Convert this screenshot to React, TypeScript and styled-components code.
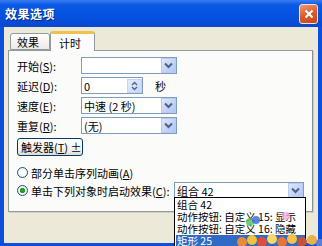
import React from "react";
import styled, { createGlobalStyle } from "styled-components";

const GlobalStyle = createGlobalStyle`
    html, body {
        margin: 0;
        padding: 0;
        background: #ffffff;
    }
    body {
        font-family: "Noto Sans CJK SC", "DejaVu Sans", sans-serif;
        font-size: 11px;
        color: #000;
    }
`;

const Window = styled.div`
    position: relative;
    width: 322px;
    height: 246px;
    overflow: hidden;
    display: flex;
    flex-direction: column;
    background: #0c4fdc;
`;

const TitleBar = styled.div`
    height: 27px;
    flex: none;
    display: flex;
    align-items: center;
    justify-content: space-between;
    padding: 0 4px 0 5px;
    background: linear-gradient(180deg, #3a7cf0 0%, #0a5ae6 18%, #0551e0 60%, #0a48cf 100%);
`;

const Title = styled.span`
    color: #fff;
    font-weight: bold;
    font-size: 12px;
    letter-spacing: 0.5px;
    text-shadow: 1px 1px 0 #0a2a7a;
`;

const CloseButton = styled.div`
    width: 17px;
    height: 18px;
    border: 1px solid #f4e4dc;
    border-radius: 3px;
    background: linear-gradient(160deg, #ee9a70 0%, #d9582a 55%, #c8461c 100%);
    display: flex;
    align-items: center;
    justify-content: center;
`;

const Frame = styled.div`
    flex: 1;
    margin: 0 4px 3px 4px;
    padding: 3px 0 0 4px;
    background: #ece9d8;
    display: flex;
    flex-direction: column;
`;

const TabStrip = styled.div`
    height: 20px;
    display: flex;
    align-items: flex-end;
    padding-left: 2px;
`;

const Tab = styled.div<{ $active?: boolean }>`
    height: ${(p) => (p.$active ? 20 : 17)}px;
    width: ${(p) => (p.$active ? 45 : 40)}px;
    box-sizing: border-box;
    padding-left: ${(p) => (p.$active ? 8 : 6)}px;
    display: flex;
    align-items: center;
    font-size: 11px;
    background: ${(p) => (p.$active ? "#fcfcfe" : "linear-gradient(#fefefe, #ecebe6)")};
    border: 1px solid #919b9c;
    border-bottom: ${(p) => (p.$active ? "none" : "1px solid #919b9c")};
    border-top: ${(p) => (p.$active ? "3px solid #f3c04c" : "1px solid #919b9c")};
    border-radius: 3px 3px 0 0;
    margin-bottom: ${(p) => (p.$active ? -1 : 0)}px;
    position: relative;
    z-index: ${(p) => (p.$active ? 1 : 0)};
`;

const Panel = styled.div`
    width: 305px;
    height: 162px;
    box-sizing: border-box;
    background: #fbfbf9;
    border: 1px solid #919b9c;
    border-right-color: #8a9090;
    box-shadow: 1px 1px 0 #d0cfc4;
    padding: 6px 8px 0 8px;
    display: flex;
    flex-direction: column;
`;

const FieldRow = styled.div`
    height: 17px;
    display: flex;
    align-items: center;
    margin-bottom: 3px;
`;

const Label = styled.span`
    width: 64px;
    flex: none;
    white-space: nowrap;
`;

const Key = styled.span`
    text-decoration: underline;
`;

const ComboBox = styled.div<{ $width: number }>`
    width: ${(p) => p.$width}px;
    height: 17px;
    box-sizing: border-box;
    border: 1px solid #7f9db9;
    background: #fff;
    display: flex;
    align-items: center;
    padding-left: 2px;
    flex: none;
`;

const ComboText = styled.span`
    flex: 1;
    white-space: nowrap;
    overflow: hidden;
`;

const DropButton = styled.div`
    width: 15px;
    height: 15px;
    box-sizing: border-box;
    border: 1px solid #b9cbf3;
    background: linear-gradient(135deg, #dfe8fd 0%, #c0d2f8 60%, #b0c6f5 100%);
    display: flex;
    align-items: center;
    justify-content: center;
`;

const SpinButtons = styled.div`
    width: 15px;
    height: 14px;
    display: flex;
    flex-direction: column;
    align-items: center;
    justify-content: center;
    background: linear-gradient(135deg, #e6edfd 0%, #c6d6f9 100%);
    border: 1px solid #c3d3fb;
    box-sizing: border-box;
`;

const Unit = styled.span`
    margin-left: 12px;
`;

const TriggerButton = styled.div`
    margin-top: 1px;
    width: 66px;
    height: 18px;
    box-sizing: border-box;
    border: 1px solid #003c74;
    border-radius: 3px;
    background: linear-gradient(#ffffff, #f0efe8 70%, #dcdad0);
    display: flex;
    align-items: center;
    padding-left: 3px;
    white-space: nowrap;
`;

const RadioRow = styled.div<{ $top: number }>`
    height: 17px;
    margin-top: ${(p) => p.$top}px;
    display: flex;
    align-items: center;
    white-space: nowrap;
`;

const RadioDot = styled.span<{ $checked?: boolean }>`
    width: 11px;
    height: 11px;
    box-sizing: border-box;
    border-radius: 50%;
    border: 1px solid #1c5180;
    background: radial-gradient(circle, ${(p) => (p.$checked ? "#21a121 0 2.5px," : "")} #ffffff 3px, #e0e0d8 100%);
    margin-right: 3px;
    flex: none;
`;

const Spacer = styled.div`
    flex: 1;
`;

const DropList = styled.div`
    position: absolute;
    left: 174px;
    top: 197px;
    width: 132px;
    height: 60px;
    box-sizing: border-box;
    border: 1px solid #000;
    background: #fff;
    padding: 1px 0 0 1px;
    z-index: 3;
`;

const ListItem = styled.div<{ $selected?: boolean }>`
    height: 12px;
    line-height: 12px;
    font-size: 10.5px;
    padding-left: 1px;
    white-space: nowrap;
    color: ${(p) => (p.$selected ? "#fff" : "#000")};
    background: ${(p) => (p.$selected ? "#316ac5" : "transparent")};
`;

const Blossoms = styled.svg`
    position: absolute;
    left: 236px;
    top: 208px;
    z-index: 4;
`;

function Chevron() {
    return (
        <svg width="9" height="7" viewBox="0 0 9 7">
            <path d="M1 1.5 L4.5 5 L8 1.5" fill="none" stroke="#4d6185" strokeWidth="2" />
        </svg>
    );
}

function Combo({ width, text }: { width: number; text: string }) {
    return (
        <ComboBox $width={width}>
            <ComboText>{text}</ComboText>
            <DropButton>
                <Chevron />
            </DropButton>
        </ComboBox>
    );
}

export default function App() {
    return (
        <>
            <GlobalStyle />
            <Window>
                <TitleBar>
                    <Title>效果选项</Title>
                    <CloseButton>
                        <svg width="10" height="10" viewBox="0 0 10 10">
                            <path d="M1.5 1.5 L8.5 8.5 M8.5 1.5 L1.5 8.5" stroke="#fff" strokeWidth="2" />
                        </svg>
                    </CloseButton>
                </TitleBar>
                <Frame>
                    <TabStrip>
                        <Tab>效果</Tab>
                        <Tab $active>计时</Tab>
                    </TabStrip>
                    <Panel>
                        <FieldRow>
                            <Label>
                                开始(<Key>S</Key>):
                            </Label>
                            <Combo width={96} text="" />
                        </FieldRow>
                        <FieldRow>
                            <Label>
                                延迟(<Key>D</Key>):
                            </Label>
                            <ComboBox $width={62}>
                                <ComboText>0</ComboText>
                                <SpinButtons>
                                    <svg width="7" height="10" viewBox="0 0 7 10">
                                        <path d="M1 4 L3.5 1.5 L6 4 M1 6 L3.5 8.5 L6 6" fill="none" stroke="#4d6185" strokeWidth="1.3" />
                                    </svg>
                                </SpinButtons>
                            </ComboBox>
                            <Unit>秒</Unit>
                        </FieldRow>
                        <FieldRow>
                            <Label>
                                速度(<Key>E</Key>):
                            </Label>
                            <Combo width={96} text="中速 (2 秒)" />
                        </FieldRow>
                        <FieldRow>
                            <Label>
                                重复(<Key>R</Key>):
                            </Label>
                            <Combo width={96} text="(无)" />
                        </FieldRow>
                        <TriggerButton>
                            触发器(<Key>T</Key>)&nbsp;±
                        </TriggerButton>
                        <RadioRow $top={8}>
                            <RadioDot />
                            部分单击序列动画(<Key>A</Key>)
                        </RadioRow>
                        <RadioRow $top={1}>
                            <RadioDot $checked />
                            单击下列对象时启动效果(<Key>C</Key>):
                            <Spacer />
                            <Combo width={130} text="组合 42" />
                        </RadioRow>
                    </Panel>
                </Frame>
                <DropList>
                    <ListItem>组合 42</ListItem>
                    <ListItem>动作按钮: 自定义 15: 显示</ListItem>
                    <ListItem>动作按钮: 自定义 16: 隐藏</ListItem>
                    <ListItem $selected>矩形 25</ListItem>
                </DropList>
                <Blossoms width="86" height="38" viewBox="0 0 86 38">
                    <circle cx="14" cy="14" r="4" fill="#5cc35a" opacity="0.85" />
                    <circle cx="20" cy="12" r="4" fill="#3f6fe0" opacity="0.85" />
                    <circle cx="50" cy="8" r="4" fill="#f2a9e6" opacity="0.8" />
                    <circle cx="6" cy="34" r="5" fill="#e88a3a" />
                    <circle cx="16" cy="32" r="5" fill="#f0c23c" />
                    <circle cx="26" cy="34" r="5" fill="#d9503c" />
                    <circle cx="36" cy="31" r="5" fill="#f5d86a" />
                    <circle cx="46" cy="34" r="5" fill="#e2763a" />
                    <circle cx="56" cy="31" r="5" fill="#f6c24a" />
                    <circle cx="66" cy="34" r="5" fill="#c6503a" />
                    <circle cx="76" cy="32" r="5" fill="#eab14a" />
                    <circle cx="84" cy="35" r="4" fill="#5b7fd6" />
                </Blossoms>
            </Window>
        </>
    );
}
